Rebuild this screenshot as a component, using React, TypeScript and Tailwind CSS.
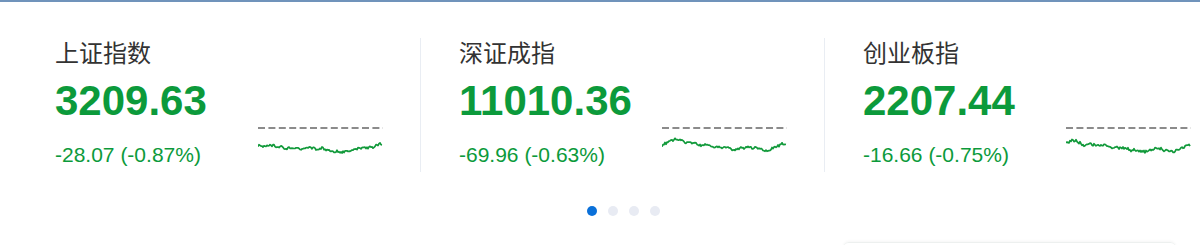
import React from 'react';

type Point = [number, number];

interface IndexCardProps {
  name: string;
  price: string;
  change: string;
  trend: Point[];
  seed: number;
  first?: boolean;
}

const SANS = "font-['Liberation_Sans','Noto_Sans_CJK_SC',sans-serif]";

// small seeded random so the sparklines look the same every render
const rand = (seed: number) => {
  let s = seed;
  return () => {
    s = (s * 9301 + 49297) % 233280;
    return s / 233280;
  };
};

const buildPath = (trend: Point[], seed: number) => {
  const next = rand(seed);
  const pts: string[] = [];
  let drift = 0;
  for (let x = 0; x <= 124; x += 1) {
    let i = 0;
    while (i < trend.length - 2 && trend[i + 1][0] < x) i++;
    const [x0, y0] = trend[i];
    const [x1, y1] = trend[i + 1];
    const t = Math.min(1, Math.max(0, (x - x0) / (x1 - x0)));
    drift = drift * 0.6 + (next() - 0.5) * 1.8;
    const y = y0 + (y1 - y0) * t + drift + (next() - 0.5) * 2.2;
    pts.push(`${x === 0 ? 'M' : 'L'}${x},${y.toFixed(1)}`);
  }
  return pts.join(' ');
};

const Sparkline = ({ trend, seed }: { trend: Point[]; seed: number }) => (
  <svg width="125" height="40" viewBox="0 0 125 40" className="mt-[89px] shrink-0">
    <line x1="0" y1="1" x2="125" y2="1" stroke="#666" strokeWidth="1.3" strokeDasharray="7 3.4" />
    <path d={buildPath(trend, seed)} fill="none" stroke="#129a3b" strokeWidth="1.7" strokeLinejoin="round" />
  </svg>
);

const IndexCard = ({ name, price, change, trend, seed, first }: IndexCardProps) => (
  <div
    className={`flex w-[404px] shrink-0 h-[134px] border-l pl-[38px] ${
      first ? 'border-transparent' : 'border-[#e9edf3]'
    }`}
  >
    <div className="w-[203px] shrink-0 pt-[2px]">
      <div className={`${SANS} text-[24px] leading-[28px] text-[#333]`}>{name}</div>
      <div className={`${SANS} mt-[12px] text-[42px] leading-[42px] font-bold text-[#0c9a3b]`}>
        {price}
      </div>
      <div className={`${SANS} mt-[21px] text-[21px] leading-[24px] text-[#0c9a3b]`}>{change}</div>
    </div>
    <Sparkline trend={trend} seed={seed} />
  </div>
);

const indices: Omit<IndexCardProps, 'first'>[] = [
  {
    name: '上证指数',
    price: '3209.63',
    change: '-28.07 (-0.87%)',
    seed: 17,
    trend: [
      [0, 18],
      [6, 20],
      [14, 19],
      [30, 21],
      [60, 22],
      [86, 25],
      [100, 22],
      [115, 20],
      [124, 17],
    ],
  },
  {
    name: '深证成指',
    price: '11010.36',
    change: '-69.96 (-0.63%)',
    seed: 41,
    trend: [
      [0, 18],
      [5, 16],
      [12, 12],
      [25, 15],
      [50, 19],
      [70, 22],
      [85, 20],
      [104, 23],
      [124, 16],
    ],
  },
  {
    name: '创业板指',
    price: '2207.44',
    change: '-16.66 (-0.75%)',
    seed: 73,
    trend: [
      [0, 16],
      [6, 12],
      [16, 17],
      [40, 19],
      [60, 21],
      [78, 25],
      [90, 21],
      [108, 24],
      [124, 18],
    ],
  },
];

const App = () => {
  return (
    <div className="w-[1200px] h-[245px] overflow-hidden bg-white border-t-2 border-[#7093bb]">
      <div className="flex pl-4 mt-[36px]">
        {indices.map((idx, i) => (
          <IndexCard key={idx.name} {...idx} first={i === 0} />
        ))}
      </div>

      <div className="flex justify-center gap-[11px] pl-[47px] mt-[34px]">
        <span className="w-[10px] h-[10px] rounded-full bg-[#0a70d9]" />
        <span className="w-[10px] h-[10px] rounded-full bg-[#e8ebf3]" />
        <span className="w-[10px] h-[10px] rounded-full bg-[#e8ebf3]" />
        <span className="w-[10px] h-[10px] rounded-full bg-[#e8ebf3]" />
      </div>

      <div className="ml-[843px] mt-[26px] w-[333px] h-[6px] rounded-t-md border-t border-[#edf0ef] shadow-[0_-1px_3px_rgba(0,0,0,0.04)]" />
    </div>
  );
};

export default App;
